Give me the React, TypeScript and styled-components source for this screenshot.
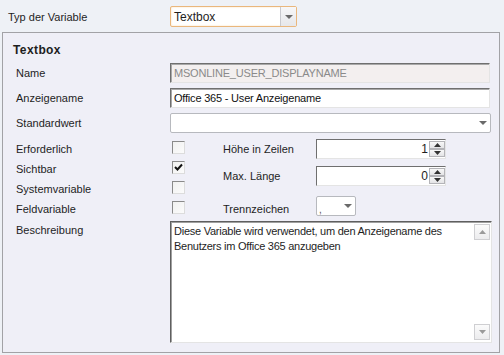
import React from "react";
import styled, { createGlobalStyle } from "styled-components";

const GlobalStyle = createGlobalStyle`
  html, body { margin: 0; padding: 0; background: #eef1f6; }
  body {
    font-family: "Liberation Sans", Arial, sans-serif;
    font-size: 11px;
    color: #1e1e1e;
  }
  * { box-sizing: border-box; }
`;

const Page = styled.div`
  width: 504px;
  height: 355px;
  padding-top: 6px;
  overflow: hidden;
`;

const TopRow = styled.div`
  display: flex;
  align-items: center;
  height: 21px;
  padding-left: 8px;
`;

const TopLabel = styled.div`
  width: 162px;
`;

const Panel = styled.div`
  margin: 5px 0 0 2px;
  width: 498px;
  height: 321px;
  border: 1px solid #a2a2a6;
  background: #efeff7;
  padding: 10px 0 0 10px;
`;

const Title = styled.div`
  font-weight: bold;
  font-size: 12px;
  letter-spacing: 0.4px;
  height: 14px;
  line-height: 14px;
  margin-bottom: 6px;
`;

const Row = styled.div<{ $h?: number; $gap?: number; $top?: boolean }>`
  display: flex;
  align-items: ${(p) => (p.$top ? "flex-start" : "center")};
  height: ${(p) => p.$h ?? 20}px;
  margin-bottom: ${(p) => p.$gap ?? 5}px;
  padding-left: 3px;
`;

const Label = styled.div<{ $w?: number; $pt?: number }>`
  width: ${(p) => p.$w ?? 154}px;
  flex-shrink: 0;
  padding-top: ${(p) => p.$pt ?? 0}px;
`;

const TextInput = styled.div<{ $disabled?: boolean; $w?: number }>`
  width: ${(p) => p.$w ?? 320}px;
  height: 20px;
  display: flex;
  align-items: center;
  padding-left: 3px;
  border-top: 1px solid #6f6f6f;
  border-left: 1px solid #6f6f6f;
  border-right: 1px solid #e4e4e4;
  border-bottom: 1px solid #e4e4e4;
  box-shadow: inset 1px 1px 0 #a8a8a8;
  background: ${(p) => (p.$disabled ? "#f3efef" : "#ffffff")};
  color: ${(p) => (p.$disabled ? "#8a8a8a" : "#111")};
  letter-spacing: -0.2px;
  white-space: nowrap;
`;

const Combo = styled.div<{ $w: number; $focus?: boolean }>`
  width: ${(p) => p.$w}px;
  height: ${(p) => (p.$focus ? 21 : 20)}px;
  display: flex;
  background: #fff;
  border: 1px solid ${(p) => (p.$focus ? "#eab77c" : "#b7b9be")};
  border-radius: 2px;
  box-shadow: ${(p) => (p.$focus ? "inset 0 0 2px #f7dcb5" : "none")};
`;

const ComboText = styled.div`
  flex: 1;
  display: flex;
  align-items: center;
  padding-left: 3px;
  font-size: 12px;
`;

const ComboButton = styled.div<{ $flat?: boolean }>`
  width: 16px;
  display: flex;
  align-items: center;
  justify-content: center;
  border-left: 1px solid ${(p) => (p.$flat ? "transparent" : "#c9cacf")};
  background: ${(p) =>
    p.$flat ? "transparent" : "linear-gradient(#f7f7f8, #e6e7ea)"};
`;

const Arrow = styled.span`
  width: 0;
  height: 0;
  border-left: 4px solid transparent;
  border-right: 4px solid transparent;
  border-top: 4px solid #6a6a6a;
`;

const CheckSection = styled.div`
  display: flex;
  height: 80px;
  margin-bottom: 4px;
`;

const CheckColumn = styled.div`
  width: 210px;
  display: flex;
  flex-direction: column;
`;

const CheckRow = styled.div`
  display: flex;
  align-items: center;
  height: 20px;
  padding-left: 3px;
`;

const Box = styled.div`
  width: 13px;
  height: 13px;
  margin-left: 2px;
  border-top: 1px solid #8a8a8a;
  border-left: 1px solid #8a8a8a;
  border-right: 1px solid #dcdcdc;
  border-bottom: 1px solid #dcdcdc;
  background: linear-gradient(135deg, #f0f0f0, #fbfbfb);
  display: flex;
  align-items: center;
  justify-content: center;
`;

const SideColumn = styled.div`
  display: flex;
  flex-direction: column;
  padding-top: 2px;
`;

const SideRow = styled.div<{ $gap: number }>`
  display: flex;
  align-items: center;
  height: 20px;
  margin-bottom: ${(p) => p.$gap}px;
`;

const Spin = styled.div`
  width: 130px;
  height: 20px;
  display: flex;
  border-top: 1px solid #6f6f6f;
  border-left: 1px solid #6f6f6f;
  border-right: 1px solid #e4e4e4;
  border-bottom: 1px solid #e4e4e4;
  background: #fff;
`;

const SpinValue = styled.div`
  flex: 1;
  display: flex;
  align-items: center;
  justify-content: flex-end;
  padding-right: 1px;
  font-size: 12px;
`;

const SpinButtons = styled.div`
  width: 16px;
  display: flex;
  flex-direction: column;
  padding: 1px 0;
`;

const SpinButton = styled.div`
  flex: 1;
  display: flex;
  align-items: center;
  justify-content: center;
  border: 1px solid #b4b4b8;
  background: linear-gradient(#f8f8f8, #e4e4e6);
`;

const SepValue = styled.div`
  flex: 1;
  padding: 7px 0 0 2px;
  font-size: 10px;
  color: #555;
`;

const TextArea = styled.div`
  width: 322px;
  height: 122px;
  display: flex;
  background: #fff;
  border-top: 1px solid #5f5f5f;
  border-left: 1px solid #5f5f5f;
  border-right: 1px solid #e4e4e4;
  border-bottom: 1px solid #e4e4e4;
  box-shadow: inset 1px 1px 0 #a0a0a0;
`;

const AreaText = styled.div`
  flex: 1;
  padding: 2px 0 0 3px;
  line-height: 15px;
  font-size: 11px;
  letter-spacing: -0.25px;
`;

const ScrollBar = styled.div`
  width: 17px;
  display: flex;
  flex-direction: column;
  justify-content: space-between;
  padding: 2px 1px 2px 0;
  background-image: radial-gradient(#e6e6e6 0.6px, transparent 0.7px);
  background-size: 2px 2px;
`;

const ScrollButton = styled.div`
  height: 16px;
  display: flex;
  align-items: center;
  justify-content: center;
  border: 1px solid #cfcfd2;
  background: linear-gradient(#fbfbfb, #ececee);
`;

const Tri = ({ up, color = "#555" }: { up?: boolean; color?: string }) => (
  <svg width="7" height="4" viewBox="0 0 7 4">
    <path d={up ? "M0 4 L3.5 0 L7 4 Z" : "M0 0 L7 0 L3.5 4 Z"} fill={color} />
  </svg>
);

const Check = () => (
  <svg width="9" height="9" viewBox="0 0 9 9">
    <path d="M1 4 L3.5 6.5 L8 1.5" stroke="#111" strokeWidth="2" fill="none" />
  </svg>
);

function CheckBox({ checked }: { checked?: boolean }) {
  return <Box>{checked && <Check />}</Box>;
}

function SpinBox({ value }: { value: number }) {
  return (
    <Spin>
      <SpinValue>{value}</SpinValue>
      <SpinButtons>
        <SpinButton>
          <Tri up color="#333" />
        </SpinButton>
        <SpinButton>
          <Tri color="#333" />
        </SpinButton>
      </SpinButtons>
    </Spin>
  );
}

const checks = [
  { label: "Erforderlich", checked: false },
  { label: "Sichtbar", checked: true },
  { label: "Systemvariable", checked: false },
  { label: "Feldvariable", checked: false },
];

export default function App() {
  return (
    <Page>
      <GlobalStyle />
      <TopRow>
        <TopLabel>Typ der Variable</TopLabel>
        <Combo $w={127} $focus>
          <ComboText>Textbox</ComboText>
          <ComboButton>
            <Arrow />
          </ComboButton>
        </Combo>
      </TopRow>

      <Panel>
        <Title>Textbox</Title>

        <Row>
          <Label>Name</Label>
          <TextInput $disabled>MSONLINE_USER_DISPLAYNAME</TextInput>
        </Row>
        <Row>
          <Label>Anzeigename</Label>
          <TextInput>Office 365 - User Anzeigename</TextInput>
        </Row>
        <Row $gap={4}>
          <Label>Standardwert</Label>
          <Combo $w={321}>
            <ComboText />
            <ComboButton $flat>
              <Arrow />
            </ComboButton>
          </Combo>
        </Row>

        <CheckSection>
          <CheckColumn>
            {checks.map((c) => (
              <CheckRow key={c.label}>
                <Label $pt={3}>{c.label}</Label>
                <CheckBox checked={c.checked} />
              </CheckRow>
            ))}
          </CheckColumn>
          <SideColumn>
            <SideRow $gap={7}>
              <Label $w={93}>Höhe in Zeilen</Label>
              <SpinBox value={1} />
            </SideRow>
            <SideRow $gap={10}>
              <Label $w={93}>Max. Länge</Label>
              <SpinBox value={0} />
            </SideRow>
            <SideRow $gap={0}>
              <Label $w={93} $pt={6}>Trennzeichen</Label>
              <Combo $w={40}>
                <SepValue>,</SepValue>
                <ComboButton $flat>
                  <Arrow />
                </ComboButton>
              </Combo>
            </SideRow>
          </SideColumn>
        </CheckSection>

        <Row $h={122} $gap={0} $top>
          <Label $pt={3}>Beschreibung</Label>
          <TextArea>
            <AreaText>
              Diese Variable wird verwendet, um den Anzeigename des
              <br />
              Benutzers im Office 365 anzugeben
            </AreaText>
            <ScrollBar>
              <ScrollButton>
                <Tri up color="#9a9a9a" />
              </ScrollButton>
              <ScrollButton>
                <Tri color="#9a9a9a" />
              </ScrollButton>
            </ScrollBar>
          </TextArea>
        </Row>
      </Panel>
    </Page>
  );
}
